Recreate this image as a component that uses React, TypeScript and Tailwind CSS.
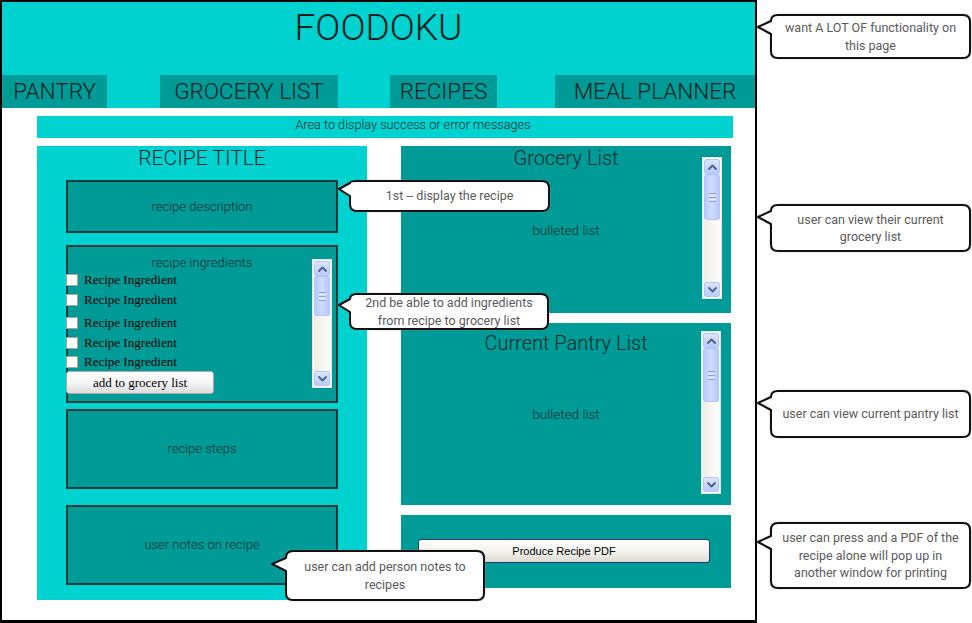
import React from "react";

function Chevron({ up }: { up?: boolean }) {
  return (
    <svg width="9" height="6" viewBox="0 0 9 6">
      <path
        d={up ? "M1 5 L4.5 1.5 L8 5" : "M1 1 L4.5 4.5 L8 1"}
        fill="none"
        stroke="#4a5f8a"
        strokeWidth="1.8"
        strokeLinecap="round"
        strokeLinejoin="round"
      />
    </svg>
  );
}

function ScrollBar({ className, thumbClass }: { className: string; thumbClass: string }) {
  return (
    <div className={"flex flex-col w-[20px] border border-[#e4e4e4] bg-white p-px " + className}>
      <div className="h-[15px] shrink-0 flex items-center justify-center rounded-[2px] border border-[#b3c6f6] bg-gradient-to-b from-[#dbe5fe] to-[#bacbfb]">
        <Chevron up />
      </div>
      <div
        className={
          "shrink-0 flex items-center justify-center rounded-[2px] border border-[#b3c6f6] bg-gradient-to-r from-[#b9cbfb] via-[#cfdcfe] to-[#b6c8fa] " +
          thumbClass
        }
      >
        <div className="flex flex-col gap-px">
          <div className="w-[7px] h-px bg-[#8ea5e4]" />
          <div className="w-[7px] h-px bg-[#f3f6ff]" />
          <div className="w-[7px] h-px bg-[#8ea5e4]" />
          <div className="w-[7px] h-px bg-[#f3f6ff]" />
          <div className="w-[7px] h-px bg-[#8ea5e4]" />
        </div>
      </div>
      <div className="flex-1 bg-gradient-to-r from-[#efede6] to-[#fdfdfb]" />
      <div className="h-[15px] shrink-0 flex items-center justify-center rounded-[2px] border border-[#b3c6f6] bg-gradient-to-b from-[#dbe5fe] to-[#bacbfb]">
        <Chevron />
      </div>
    </div>
  );
}

function Callout({
  className,
  w,
  h,
  tip,
  dx = 13,
  lines,
}: {
  className: string;
  w: number;
  h: number;
  tip: number;
  dx?: number;
  lines: string[];
}) {
  const r = 7;
  const W = w - 1;
  const H = h - 1;
  const b1 = Math.max(tip - 6, 3);
  const b2 = tip + 7;
  const d =
    b1 > 1 + r
      ? `M ${1 + r} 1 H ${W - r} Q ${W} 1 ${W} ${1 + r} V ${H - r} Q ${W} ${H} ${W - r} ${H} H ${1 + r} Q 1 ${H} 1 ${H - r} V ${b2} L ${1 - dx} ${tip} L 1 ${b1} V ${1 + r} Q 1 1 ${1 + r} 1 Z`
      : `M ${1 + r} 1 H ${W - r} Q ${W} 1 ${W} ${1 + r} V ${H - r} Q ${W} ${H} ${W - r} ${H} H ${1 + r} Q 1 ${H} 1 ${H - r} V ${b2} L ${1 - dx} ${tip} L 1 ${b1} Q 1 1 ${1 + r} 1 Z`;
  return (
    <div className={"absolute flex flex-col items-center justify-center " + className}>
      <svg
        className="absolute left-0 top-0 overflow-visible"
        width={w}
        height={h}
        viewBox={`0 0 ${w} ${h}`}
      >
        <path d={d} fill="#ffffff" stroke="#9a9a9a" strokeWidth="3.2" strokeLinejoin="round" opacity="0.35" />
        <path d={d} fill="#ffffff" stroke="#111111" strokeWidth="2" strokeLinejoin="round" />
      </svg>
      {lines.map((l, i) => (
        <div key={i} className="relative text-[12.5px] leading-[17.5px] text-[#5a5a5a] whitespace-nowrap">
          {l}
        </div>
      ))}
    </div>
  );
}

function Ingredient({ className }: { className: string }) {
  return (
    <div className={"flex items-center h-[12px] -ml-[2px] " + className}>
      <div className="w-[12px] h-[12px] bg-white border border-[#a8a39b]" />
      <span className="ml-[6px] font-['Liberation_Serif',serif] text-[13px] text-black leading-[12px]">
        Recipe Ingredient
      </span>
    </div>
  );
}

export default function App() {
  return (
    <div className="relative w-[972px] h-[623px] bg-white overflow-hidden font-['Roboto',sans-serif] text-[#0b2b2b]">
      <div className="w-[757px] h-[623px] border-2 border-b-[3px] border-black flex flex-col">
        {/* header */}
        <div className="h-[106px] bg-[#00d2cf] flex flex-col shrink-0">
          <div className="h-[51px] flex items-center justify-center text-[37px] font-light leading-none text-[#0a1f1f]">
            FOODOKU
          </div>
          <div className="mt-[22px] h-[33px] flex text-[22.5px] font-light text-[#0a1f1f] leading-none">
            <div className="w-[105px] bg-[#009b96] flex items-center justify-center">PANTRY</div>
            <div className="ml-[53px] w-[178px] bg-[#009b96] flex items-center justify-center">GROCERY LIST</div>
            <div className="ml-[52px] w-[107px] bg-[#009b96] flex items-center justify-center">RECIPES</div>
            <div className="ml-[58px] w-[200px] bg-[#009b96] flex items-center justify-center">MEAL PLANNER</div>
          </div>
        </div>

        {/* messages */}
        <div className="mt-[8px] ml-[35px] w-[696px] h-[22px] bg-[#00d2cf] pl-[56px] text-center text-[12.7px] font-light leading-[17px] text-[#0b2b2b]">
          Area to display success or error messages
        </div>

        {/* main row */}
        <div className="mt-[8px] ml-[35px] flex gap-[34px]">
          {/* recipe panel */}
          <div className="w-[330px] h-[454px] bg-[#00d2cf] flex flex-col items-center">
            <div className="h-[22px] text-[21px] leading-[24px] font-light text-[#0b2b2b]">RECIPE TITLE</div>
            <div className="mt-[12px] w-[272px] h-[53px] bg-[#009b96] border-2 border-[#173a3a] flex items-center justify-center text-[13px] font-light">
              recipe description
            </div>
            <div className="relative mt-[12px] w-[272px] h-[158px] bg-[#009b96] border-2 border-[#173a3a] flex flex-col">
              <div className="pt-[8px] h-[24px] text-center text-[13px] leading-[16px] font-light">recipe ingredients</div>
              <Ingredient className="mt-[3px]" />
              <Ingredient className="mt-[8px]" />
              <Ingredient className="mt-[11px]" />
              <Ingredient className="mt-[8px]" />
              <Ingredient className="mt-[7px]" />
              <div className="mt-[3px] -ml-[2px] w-[148px] h-[23px] rounded-[3px] border border-[#a9a9a9] bg-gradient-to-b from-white via-[#f6f6f6] to-[#dcdcdc] flex items-center justify-center font-['Liberation_Serif',serif] text-[13px] text-black">
                add to grocery list
              </div>
              <ScrollBar className="absolute left-[244px] top-[12px] h-[129px]" thumbClass="h-[40px]" />
            </div>
            <div className="mt-[6px] w-[272px] h-[80px] bg-[#009b96] border-2 border-[#173a3a] flex items-center justify-center text-[13px] font-light">
              recipe steps
            </div>
            <div className="mt-[16px] w-[272px] h-[80px] bg-[#009b96] border-2 border-[#173a3a] flex items-center justify-center text-[13px] font-light">
              user notes on recipe
            </div>
          </div>

          {/* right column */}
          <div className="w-[330px] flex flex-col">
            <div className="relative h-[167px] bg-[#009b96] flex flex-col items-center">
              <div className="h-[24px] text-[20px] leading-[24px] font-light">Grocery List</div>
              <div className="mt-[52px] text-[13.5px] leading-[16px] font-light">bulleted list</div>
              <ScrollBar className="absolute right-[9px] top-[11px] h-[142px]" thumbClass="h-[46px]" />
            </div>
            <div className="relative mt-[10px] h-[182px] bg-[#009b96] flex flex-col items-center">
              <div className="mt-[8px] h-[24px] text-[20px] leading-[24px] font-light">Current Pantry List</div>
              <div className="mt-[51px] text-[13.5px] leading-[16px] font-light">bulleted list</div>
              <ScrollBar className="absolute right-[10px] top-[8px] h-[163px]" thumbClass="h-[54px]" />
            </div>
            <div className="mt-[10px] h-[73px] bg-[#009b96] pt-[24px] pl-[17px]">
              <div className="w-[292px] h-[24px] rounded-[3px] border border-[#1f3d73] bg-gradient-to-b from-white via-[#f4f3ef] to-[#dedad1] flex items-center justify-center font-['Liberation_Sans',sans-serif] text-[11px] text-black">
                Produce Recipe PDF
              </div>
            </div>
          </div>
        </div>
      </div>

      {/* annotations */}
      <Callout className="left-[770px] top-[14px] w-[201px] h-[45px]" w={201} h={45} tip={13} lines={["want A LOT OF functionality on", "this page"]} />
      <Callout className="left-[349px] top-[180px] w-[201px] h-[32px]" w={201} h={32} tip={9} dx={11} lines={["1st -- display the recipe"]} />
      <Callout className="left-[349px] top-[293px] w-[200px] h-[37px]" w={200} h={37} tip={12} dx={11} lines={["2nd be able to add ingredients", "from recipe to grocery list"]} />
      <Callout className="left-[770px] top-[204px] w-[201px] h-[48px]" w={201} h={48} tip={13} lines={["user can view their current", "grocery list"]} />
      <Callout className="left-[770px] top-[390px] w-[201px] h-[48px]" w={201} h={48} tip={13} lines={["user can view current pantry list"]} />
      <Callout className="left-[770px] top-[522px] w-[201px] h-[67px]" w={201} h={67} tip={20} lines={["user can press and a PDF of the", "recipe alone will pop up in", "another window for printing"]} />
      <Callout className="left-[285px] top-[550px] w-[200px] h-[51px]" w={200} h={51} tip={14} dx={14} lines={["user can add person notes to", "recipes"]} />
    </div>
  );
}
